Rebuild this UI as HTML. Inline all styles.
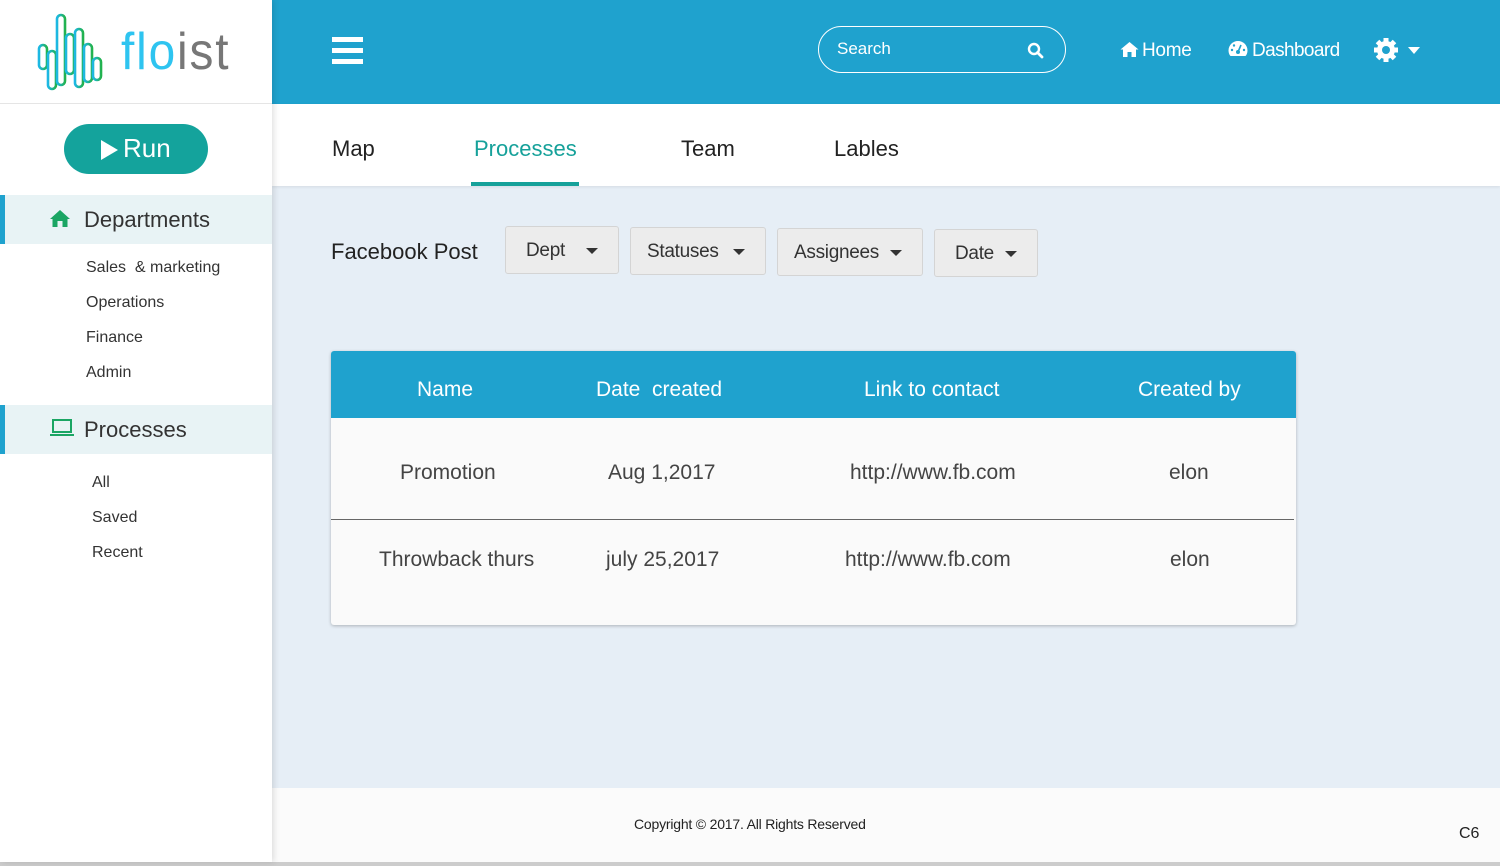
<!DOCTYPE html>
<html><head><meta charset="utf-8"><style>
*{margin:0;padding:0;box-sizing:border-box}
body{width:1500px;height:866px;position:relative;overflow:hidden;font-family:"Liberation Sans",sans-serif;background:#e6eef6;color:#333}
.abs{position:absolute}
#side{left:0;top:0;width:272px;height:862px;background:#fff;box-shadow:2px 0 6px rgba(0,0,0,.12);z-index:2}
#hdr{left:272px;top:0;width:1228px;height:104px;background:#1fa2ce}
#tabs{left:272px;top:104px;width:1228px;height:82px;background:#fff;box-shadow:0 1px 3px rgba(0,0,0,.08)}
.tab{position:absolute;top:32px;font-size:22px;color:#222}
.sec{position:absolute;left:0;width:272px;height:49px;background:#e8f3f5;border-left:5px solid #1fa2ce;font-size:22px;color:#333}
.item{position:absolute;font-size:16px;color:#333}
.dd{position:absolute;height:48px;background:#ececec;border:1px solid #d4d4d4;border-radius:3px;font-size:19px;color:#333;padding:13px 0 0 20px;letter-spacing:-0.3px}
.dd:after{content:"";position:absolute;right:20px;top:21px;border:6px solid transparent;border-top:6px solid #333}
#tbl{left:331px;top:351px;width:965px;height:274px;background:#fafafa;border-radius:3px;box-shadow:0 1px 3px rgba(0,0,0,.25);overflow:hidden}
.th{position:absolute;top:27px;font-size:21px;color:#fff}
.td{position:absolute;font-size:21px;color:#444}
</style></head><body>
<div id="side" class="abs">
<svg class="abs" style="left:36px;top:12px" width="68" height="80" viewBox="0 0 68 80">
<defs><linearGradient id="g" x1="0" y1="0" x2="1" y2="0"><stop offset="0" stop-color="#1db8e6"/><stop offset="1" stop-color="#22b24c"/></linearGradient></defs>
<g fill="none" stroke="url(#g)" stroke-width="2.6">
<rect x="3" y="33" width="8" height="24" rx="4"/>
<rect x="12" y="39" width="8" height="38" rx="4"/>
<rect x="21" y="3" width="8" height="70" rx="4"/>
<rect x="30" y="22" width="8" height="40" rx="4"/>
<rect x="39" y="17" width="8" height="58" rx="4"/>
<rect x="48" y="32" width="8" height="38" rx="4"/>
<rect x="57" y="46" width="8" height="22" rx="4"/>
</g></svg>
<div class="abs" style="left:121px;top:22px;font-size:52px;letter-spacing:2px;transform:scaleX(0.92);transform-origin:left"><span style="color:#2ec4f0">flo</span><span style="color:#777">ist</span></div>
<div class="abs" style="left:0;top:103px;width:272px;border-top:1px solid #e5e5e5"></div>
<div class="abs" style="left:64px;top:124px;width:144px;height:50px;border-radius:25px;background:#14a39c;color:#fff;font-size:26px;padding:9px 0 0 36px"><span style="position:absolute;left:37px;top:16px;border-left:17px solid #fff;border-top:10px solid transparent;border-bottom:10px solid transparent"></span><span style="margin-left:23px">Run</span></div>
<div class="sec" style="top:195px"><svg class="abs" style="left:44px;top:14px" width="22" height="18" viewBox="0 0 22 18"><path d="M11 1 L1 10 L3.5 10 L3.5 18 L8.5 18 L8.5 12 L13.5 12 L13.5 18 L18.5 18 L18.5 10 L21 10 Z" fill="#1aa563"/></svg><span class="abs" style="left:79px;top:12px">Departments</span></div>
<div class="item" style="left:86px;top:259px">Sales &nbsp;&amp; marketing</div>
<div class="item" style="left:86px;top:294px">Operations</div>
<div class="item" style="left:86px;top:329px">Finance</div>
<div class="item" style="left:86px;top:364px">Admin</div>
<div class="sec" style="top:405px"><svg class="abs" style="left:44px;top:14px" width="26" height="18" viewBox="0 0 26 18"><rect x="4" y="1" width="18" height="12" fill="none" stroke="#1aa563" stroke-width="2"/><rect x="1" y="15" width="24" height="2" fill="#1aa563"/></svg><span class="abs" style="left:79px;top:12px">Processes</span></div>
<div class="item" style="left:92px;top:474px">All</div>
<div class="item" style="left:92px;top:509px">Saved</div>
<div class="item" style="left:92px;top:544px">Recent</div>
</div>
<div id="hdr" class="abs">
<div class="abs" style="left:60px;top:37px;width:31px;height:5px;background:#fff;box-shadow:0 11px 0 #fff,0 22px 0 #fff"></div>
<div class="abs" style="left:546px;top:26px;width:248px;height:47px;border:1.5px solid #fff;border-radius:24px;color:#fff;font-size:17px;padding:12px 0 0 18px">Search
<svg class="abs" style="left:208px;top:15px" width="17" height="17" viewBox="0 0 17 17"><circle cx="7" cy="7" r="5" fill="none" stroke="#fff" stroke-width="2.4"/><path d="M10.5 10.5 L15 15" stroke="#fff" stroke-width="2.8" stroke-linecap="round"/></svg></div>
<svg class="abs" style="left:848px;top:41px" width="19" height="16" viewBox="0 0 19 16"><path d="M9.5 1 L0.5 8.5 L3 8.5 L3 16 L7.5 16 L7.5 11 L11.5 11 L11.5 16 L16 16 L16 8.5 L18.5 8.5 Z" fill="#fff"/></svg>
<div class="abs" style="left:870px;top:40px;font-size:19px;color:#fff;letter-spacing:-0.3px">Home</div>
<svg class="abs" style="left:956px;top:40px" width="20" height="17" viewBox="0 0 20 17"><path d="M10 1 A9.5 9.5 0 0 0 0.5 10.5 C0.5 13 1.5 15 2.5 16 L17.5 16 C18.5 15 19.5 13 19.5 10.5 A9.5 9.5 0 0 0 10 1Z" fill="#fff"/><circle cx="10" cy="12" r="2" fill="#1fa2ce"/><path d="M10 12 L13 5" stroke="#1fa2ce" stroke-width="1.6"/><circle cx="4" cy="10" r="1.2" fill="#1fa2ce"/><circle cx="6" cy="5.5" r="1.2" fill="#1fa2ce"/><circle cx="16" cy="10" r="1.2" fill="#1fa2ce"/></svg>
<div class="abs" style="left:980px;top:40px;font-size:19px;color:#fff;letter-spacing:-0.6px">Dashboard</div>
<svg class="abs" style="left:1100px;top:36px" width="28" height="28" viewBox="0 0 28 28"><g fill="#fff"><circle cx="14" cy="14" r="9"/><g stroke="#fff" stroke-width="5"><path d="M14 2v24M2 14h24M5.5 5.5l17 17M22.5 5.5l-17 17"/></g></g><circle cx="14" cy="14" r="4" fill="#1fa2ce"/></svg>
<div class="abs" style="left:1136px;top:47px;border:6px solid transparent;border-top:7px solid #fff"></div>
</div>
<div id="tabs" class="abs">
<div class="tab" style="left:60px">Map</div>
<div class="tab" style="left:202px;color:#16a19a">Processes</div>
<div class="abs" style="left:199px;top:78px;width:108px;height:4px;background:#16a19a"></div>
<div class="tab" style="left:409px">Team</div>
<div class="tab" style="left:562px">Lables</div>
</div>
<div class="abs" style="left:331px;top:239px;font-size:22px;color:#222">Facebook Post</div>
<div class="dd" style="left:505px;top:226px;width:114px">Dept</div>
<div class="dd" style="left:630px;top:227px;width:136px;padding-left:16px">Statuses</div>
<div class="dd" style="left:777px;top:228px;width:146px;padding-left:16px">Assignees</div>
<div class="dd" style="left:934px;top:229px;width:104px">Date</div>
<div id="tbl" class="abs">
<div class="abs" style="left:0;top:0;width:965px;height:67px;background:#1fa2ce"></div>
<div class="th" style="left:86px">Name</div>
<div class="th" style="left:265px">Date &nbsp;created</div>
<div class="th" style="left:533px">Link to contact</div>
<div class="th" style="left:807px">Created by</div>
<div class="td" style="left:69px;top:110px">Promotion</div>
<div class="td" style="left:277px;top:110px">Aug 1,2017</div>
<div class="td" style="left:519px;top:110px">http://www.fb.com</div>
<div class="td" style="left:838px;top:110px">elon</div>
<div class="abs" style="left:0;top:168px;width:963px;border-top:1px solid #666"></div>
<div class="td" style="left:48px;top:197px">Throwback thurs</div>
<div class="td" style="left:275px;top:197px">july 25,2017</div>
<div class="td" style="left:514px;top:197px">http://www.fb.com</div>
<div class="td" style="left:839px;top:197px">elon</div>
</div>
<div class="abs" style="left:272px;top:788px;width:1228px;height:74px;background:#fbfbfb"></div>
<div class="abs" style="left:634px;top:816px;font-size:14px;color:#222;letter-spacing:-0.2px">Copyright © 2017. All Rights Reserved</div>
<div class="abs" style="left:1459px;top:825px;font-size:16px;color:#222">C6</div>
<div class="abs" style="left:0;top:862px;width:1500px;height:4px;background:#ccc"></div>
</body></html>
